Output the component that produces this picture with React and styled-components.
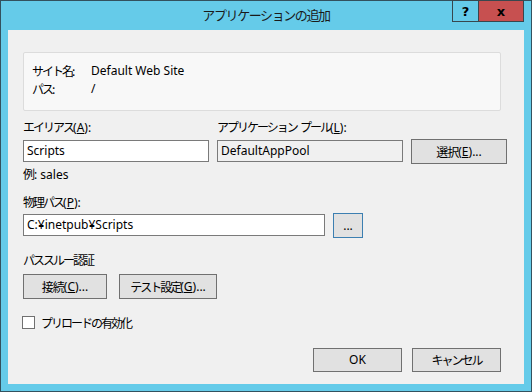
import React from 'react';
import styled, { createGlobalStyle } from 'styled-components';

const Global = createGlobalStyle`
  html, body {
    margin: 0;
    padding: 0;
    background: #ffffff;
  }
  * {
    box-sizing: border-box;
  }
`;

const font = `"Noto Sans", "Noto Sans CJK JP", sans-serif`;

const Window = styled.div`
  width: 532px;
  height: 392px;
  border: 1px solid #33515e;
  background: #65cbe9;
  display: flex;
  flex-direction: column;
  font-family: ${font};
  font-size: 12px;
  color: #000;
`;

const TitleBar = styled.div`
  height: 29px;
  display: grid;
  grid-template-columns: 79px 1fr 79px;
`;

const Title = styled.div`
  grid-column: 2;
  text-align: center;
  font-family: "Noto Sans CJK JP", sans-serif;
  font-size: 13px;
  letter-spacing: -1.4px;
  line-height: 28px;
  color: #1a1a1a;
`;

const Controls = styled.div`
  grid-column: 3;
  display: flex;
  margin-top: -1px;
  height: 22px;
`;

const CtrlButton = styled.div`
  width: ${p => p.$w}px;
  height: 22px;
  border: 1px solid #38474e;
  border-left-width: ${p => (p.$first ? 1 : 0)}px;
  background: ${p => p.$bg};
  display: flex;
  align-items: center;
  justify-content: center;
  font-family: "DejaVu Sans", sans-serif;
  font-weight: bold;
  font-size: ${p => p.$fs}px;
  line-height: 1;
  color: #000;
`;

const Content = styled.div`
  flex: 1;
  margin: 0 7px 7px 7px;
  background: #f0f0f0;
  padding: 22px 0 0 15px;
  display: flex;
  flex-direction: column;
`;

const GroupBox = styled.div`
  width: 478px;
  height: 59px;
  background: #f8f8f8;
  border: 1px solid #dcdcdc;
  border-radius: 2px;
  padding: 9px 0 0 8px;
  display: grid;
  grid-template-columns: 59px auto;
  grid-auto-rows: 18px;
  line-height: 18px;
`;

const Label = styled.div`
  line-height: 18px;
  white-space: nowrap;
  margin-top: ${p => p.$mt || 0}px;
`;

const Ja = styled.span`
  font-family: "Noto Sans CJK JP", sans-serif;
  letter-spacing: ${p => (p.$tight ? -2 : -1)}px;
`;

const FieldGrid = styled.div`
  margin-top: ${p => p.$mt}px;
  display: grid;
  grid-template-columns: ${p => p.$cols};
  column-gap: 8px;
  row-gap: ${p => p.$gap}px;
  align-items: start;
`;

const TextInput = styled.div`
  width: ${p => p.$w}px;
  height: 22px;
  margin-top: 1px;
  border: 1px solid #7a7a7a;
  background: ${p => (p.$readonly ? '#f0f0f0' : '#ffffff')};
  padding: 0 3px;
  line-height: 20px;
  white-space: nowrap;
`;

const Button = styled.div`
  width: ${p => p.$w}px;
  height: ${p => p.$h || 25}px;
  border: 1px solid ${p => (p.$focus ? '#3c7fb1' : '#707070')};
  background: #e1e1e1;
  display: flex;
  align-items: center;
  justify-content: center;
  white-space: nowrap;
  line-height: 18px;
`;

const ButtonRow = styled.div`
  margin-top: ${p => p.$mt}px;
  display: flex;
  gap: ${p => p.$gap}px;
  width: 478px;
  justify-content: ${p => (p.$end ? 'flex-end' : 'flex-start')};
`;

const CheckRow = styled.label`
  margin-top: 14px;
  margin-left: -1px;
  display: flex;
  align-items: center;
  gap: 6px;
  height: 18px;
`;

const Checkbox = styled.span`
  width: 13px;
  height: 13px;
  border: 1px solid #707070;
  background: #ffffff;
`;

const App = () => {
  return (
    <>
      <Global />
      <Window>
        <TitleBar>
          <Title>アプリケーションの追加</Title>
          <Controls>
            <CtrlButton $w={27} $first $bg="#65cbe9" $fs={13}>?</CtrlButton>
            <CtrlButton $w={45} $bg="#c75050" $fs={13}>x</CtrlButton>
          </Controls>
        </TitleBar>
        <Content>
          <GroupBox>
            <Ja $tight>サイト名:</Ja>
            <span>Default Web Site</span>
            <Ja $tight>パス:</Ja>
            <span>/</span>
          </GroupBox>

          <FieldGrid $mt={7} $cols="186px 186px 96px" $gap={2}>
            <Label><Ja $tight>エイリアス</Ja>(<u>A</u>):</Label>
            <Label><Ja $tight>アプリケーション</Ja> <Ja $tight>プール</Ja>(<u>L</u>):</Label>
            <span />
            <TextInput $w={186}>Scripts</TextInput>
            <TextInput $w={186} $readonly>DefaultAppPool</TextInput>
            <Button $w={96}><Ja>選択</Ja>(<u>E</u>)...</Button>
          </FieldGrid>

          <Label $mt={1}><Ja>例</Ja>: sales</Label>

          <FieldGrid $mt={9} $cols="302px 30px" $gap={1}>
            <Label><Ja $tight>物理パス</Ja>(<u>P</u>):</Label>
            <span />
            <TextInput $w={302}>C:¥inetpub¥Scripts</TextInput>
            <Button $w={30} $focus>...</Button>
          </FieldGrid>

          <Label $mt={13}><Ja $tight>パススルー認証</Ja></Label>

          <ButtonRow $mt={4} $gap={12}>
            <Button $w={84}><Ja>接続</Ja>(<u>C</u>)...</Button>
            <Button $w={98}><Ja $tight>テスト設定</Ja>(<u>G</u>)...</Button>
          </ButtonRow>

          <CheckRow>
            <Checkbox />
            <Ja $tight>プリロードの有効化</Ja>
          </CheckRow>

          <ButtonRow $mt={17} $gap={10} $end>
            <Button $w={89} $h={24}>OK</Button>
            <Button $w={89} $h={24}><Ja $tight>キャンセル</Ja></Button>
          </ButtonRow>
        </Content>
      </Window>
    </>
  );
};

export default App;
